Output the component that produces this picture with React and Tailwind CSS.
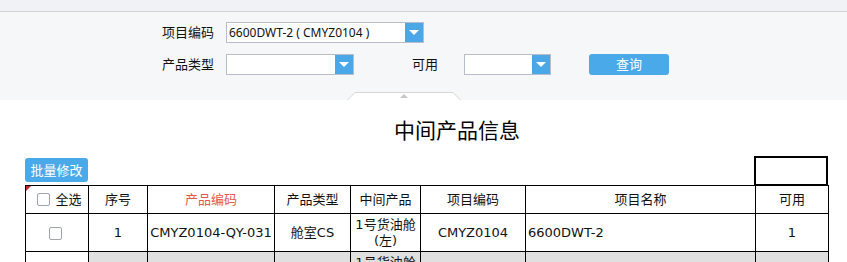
const cols = [
  { key: 'check', label: '全选', w: 'w-[63px]' },
  { key: 'no', label: '序号', w: 'w-[59px]' },
  { key: 'code', label: '产品编码', w: 'w-[127px]', red: true },
  { key: 'type', label: '产品类型', w: 'w-[76px]' },
  { key: 'mid', label: '中间产品', w: 'w-[70px]' },
  { key: 'proj', label: '项目编码', w: 'w-[105px]' },
  { key: 'name', label: '项目名称', w: 'w-[230px]' },
  { key: 'avail', label: '可用', w: 'w-[73px]' },
]

const rows = [
  { no: '1', code: 'CMYZ0104-QY-031', type: '舱室CS', mid: '1号货油舱(左)', proj: 'CMYZ0104', name: '6600DWT-2', avail: '1' },
  { no: '2', code: 'CMYZ0104-QY-032', type: '舱室CS', mid: '1号货油舱(右)', proj: 'CMYZ0104', name: '6600DWT-2', avail: '1', grey: true },
]

function Box() {
  return <span className="inline-block w-[13px] h-[13px] border border-[#a0a4ab] rounded-[2px] bg-white align-middle" />
}

function Select({ w, value }) {
  return (
    <div className={`flex h-[21px] ${w} border border-[#b9bccb] bg-white`}>
      <div className="flex-1 px-[2px] text-[12px] leading-[19px] text-[#111] whitespace-nowrap overflow-hidden">{value}</div>
      <div className="w-[18px] bg-[#4aa8e8] flex items-center justify-center">
        <span className="w-0 h-0 border-l-[5px] border-r-[5px] border-t-[5px] border-l-transparent border-r-transparent border-t-white" />
      </div>
    </div>
  )
}

export default function App() {
  return (
    <div className="w-[847px] bg-white text-[13px] text-[#111] font-['Noto_Sans','Noto_Sans_CJK_SC',sans-serif]">
      <div className="h-[12px] bg-[#f1f2f5] border-b border-[#d3d4d8]" />
      <div className="relative h-[88px] bg-[#f6f7f9] pl-[162px] pt-[10px]">
        <div className="flex items-center h-[21px]">
          <span className="w-[64px]">项目编码</span>
          <Select w="w-[198px]" value="6600DWT-2 ( CMYZ0104 )" />
        </div>
        <div className="flex items-center h-[21px] mt-[11px]">
          <span className="w-[64px]">产品类型</span>
          <Select w="w-[128px]" value="" />
          <span className="ml-[58px] w-[52px]">可用</span>
          <Select w="w-[87px]" value="" />
          <button className="ml-[38px] w-[80px] h-[21px] rounded-[3px] bg-[#49a9e9] text-white text-[13px] leading-[21px]">查询</button>
        </div>
        <div className="absolute left-[347px] bottom-0 w-[114px] h-[8px] flex justify-center">
          <svg width="114" height="8" viewBox="0 0 114 8" className="absolute inset-0">
            <path d="M0.5 8 L8 0.5 L106 0.5 L113.5 8" fill="#fff" stroke="#d6d6d8" />
          </svg>
          <span className="relative mt-[2px] w-0 h-0 border-l-[4px] border-r-[4px] border-b-[4px] border-l-transparent border-r-transparent border-b-[#c8c8cc]" />
        </div>
      </div>
      <div className="h-[55px] pl-[394px] pt-[16px] text-[21px] leading-[28px] text-black">中间产品信息</div>
      <div className="flex items-end justify-between pl-[25px] pr-[19px] h-[30px]">
        <button className="mb-[3px] w-[63px] h-[24px] rounded-[3px] bg-[#49a9e9] text-white text-[13px] leading-[24px]">批量修改</button>
        <div className="w-[74px] h-[30px] border-2 border-black -mb-[1px]" />
      </div>
      <div className="pl-[25px]">
        <table className="relative border-collapse table-fixed w-[803px] text-[13px] font-['DejaVu_Sans','Noto_Sans_CJK_SC',sans-serif]">
          <thead>
            <tr className="h-[28px]">
              {cols.map(c => (
                <th key={c.key} className={`${c.w} border border-black font-normal text-center p-0 ${c.red ? 'text-[#e8574b]' : ''} ${c.key === 'check' ? 'relative' : ''}`}>
                  {c.key === 'check' ? (
                    <>
                      <span className="absolute left-0 top-0 w-0 h-0 border-t-[5px] border-r-[5px] border-t-[#c0282d] border-r-transparent" />
                      <span className="flex items-center justify-center gap-[5px] pl-[5px]"><Box />{c.label}</span>
                    </>
                  ) : c.label}
                </th>
              ))}
            </tr>
          </thead>
          <tbody>
            {rows.map(r => (
              <tr key={r.no} className="h-[38px]">
                <td className="border border-black text-center p-0 pr-[4px] bg-white"><Box /></td>
                {r.grey ? (
                  <>
                    <td className="border border-black bg-[#e0e0e0]" />
                    <td className="border border-black bg-[#e0e0e0]" />
                    <td className="border border-black bg-[#e0e0e0]" />
                    <td className="border border-black bg-[#e0e0e0] text-center leading-[16px] px-[4px] align-top pt-[3px]">{r.mid}</td>
                    <td className="border border-black bg-[#e0e0e0]" />
                    <td className="border border-black bg-[#e0e0e0]" />
                    <td className="border border-black bg-[#e0e0e0]" />
                  </>
                ) : (
                  <>
                    <td className="border border-black text-center">{r.no}</td>
                    <td className="border border-black text-center whitespace-nowrap px-0">{r.code}</td>
                    <td className="border border-black text-center">{r.type}</td>
                    <td className="border border-black text-center leading-[16px] px-[4px]">{r.mid}</td>
                    <td className="border border-black text-center">{r.proj}</td>
                    <td className="border border-black text-left pl-[2px]">{r.name}</td>
                    <td className="border border-black text-center">{r.avail}</td>
                  </>
                )}
              </tr>
            ))}
          </tbody>
        </table>
      </div>
    </div>
  )
}
